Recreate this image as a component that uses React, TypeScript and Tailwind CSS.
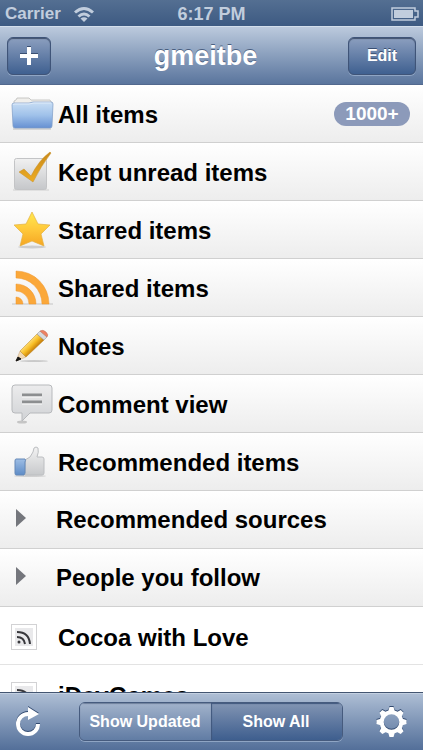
import { useState, type ReactNode } from "react";

function FolderIcon() {
  return (
    <svg width="44" height="36" viewBox="0 0 44 36">
      <defs>
        <linearGradient id="folder" x1="0" y1="0" x2="0" y2="1">
          <stop offset="0" stopColor="#c9def4" />
          <stop offset="0.5" stopColor="#a0c2ea" />
          <stop offset="1" stopColor="#6690d2" />
        </linearGradient>
      </defs>
      <path d="M3 33h38" stroke="#999" strokeWidth="1" opacity="0.6" />
      <path
        d="M4 8V5l2-1 1-2h12l2 2h19l2 3v4H4z"
        fill="#f0efec"
        stroke="#b5b4b2"
        strokeWidth="0.7"
      />
      <path
        d="M2 9q0-2 2-2h15l4-1h18q2 0 2 2l-1 22q0 2-2 2H5q-2 0-2-2z"
        fill="url(#folder)"
        stroke="#7e9cc6"
        strokeWidth="0.7"
      />
      <path d="M3 9q0-1 2-1h14l5-1h17" fill="none" stroke="#deebfa" />
    </svg>
  );
}

function CheckIcon() {
  return (
    <svg width="44" height="42" viewBox="0 0 44 42">
      <defs>
        <linearGradient id="checkBox" x1="0" y1="0" x2="0" y2="1">
          <stop offset="0" stopColor="#f1f1f1" />
          <stop offset="1" stopColor="#c5c7ca" />
        </linearGradient>
        <linearGradient id="checkMark" x1="0" y1="0" x2="0" y2="1">
          <stop offset="0" stopColor="#c98a1b" />
          <stop offset="1" stopColor="#edac22" />
        </linearGradient>
      </defs>
      <path d="M3 39h36" stroke="#bbb" strokeWidth="1" opacity="0.6" />
      <rect
        x="4.5"
        y="7.5"
        width="32"
        height="31"
        rx="2"
        fill="url(#checkBox)"
        stroke="#c3c4c6"
      />
      <path
        d="M9 21l5-3 7 7Q29 9 40 1l1 1Q31 15 23 31z"
        fill="url(#checkMark)"
        stroke="#c68f24"
        strokeWidth="0.5"
      />
    </svg>
  );
}

function StarIcon() {
  return (
    <svg width="44" height="40" viewBox="0 0 44 40">
      <defs>
        <linearGradient id="star" x1="0" y1="0" x2="0" y2="1">
          <stop offset="0" stopColor="#ffe94f" />
          <stop offset="0.5" stopColor="#ffc93b" />
          <stop offset="1" stopColor="#f5a623" />
        </linearGradient>
      </defs>
      <ellipse cx="22" cy="37" rx="14" ry="1.500" fill="#999" opacity="0.4" />
      <path
        d="M22 2l6 12 12 1-9 9 3 12-12-5-12 5 3-12-9-9 12-1z"
        fill="url(#star)"
        stroke="#e4b040"
        strokeWidth="0.7"
        strokeLinejoin="round"
      />
    </svg>
  );
}

function FeedIcon() {
  return (
    <svg width="44" height="38" viewBox="0 0 44 38">
      <path d="M2 35h41" stroke="#aaa" strokeWidth="1" opacity="0.6" />
      <g fill="#fba83a" stroke="#ee972e" strokeWidth="0.5">
        <path d="M6 28a7 7 0 0 1 7 7H6z" />
        <path d="M6 15a20 20 0 0 1 20 20h-7A13 13 0 0 0 6 22z" />
        <path d="M6 2a33 33 0 0 1 33 33h-7A26 26 0 0 0 6 9z" />
      </g>
    </svg>
  );
}

function PencilIcon() {
  return (
    <svg width="44" height="38" viewBox="0 0 44 38">
      <defs>
        <linearGradient id="pencil" gradientUnits="userSpaceOnUse" x1="18" y1="15" x2="25" y2="22">
          <stop offset="0" stopColor="#ffe07a" />
          <stop offset="0.5" stopColor="#f7bd25" />
          <stop offset="1" stopColor="#c47b0a" />
        </linearGradient>
      </defs>
      <ellipse cx="24" cy="34" rx="14" ry="0.800" fill="#999" opacity="0.6" />
      <path d="M6 34l4-10 6 6z" fill="#f1d9b5" stroke="#c9a57b" strokeWidth="0.5" />
      <path d="M6 34l2-4 3 2z" fill="#151515" stroke="#151515" />
      <path d="M10 24L27 7l7 6-18 17z" fill="url(#pencil)" stroke="#b98322" strokeWidth="0.5" />
      <path d="M27 7l3-3 7 6-3 3z" fill="#d8dade" stroke="#8d8f94" strokeWidth="0.5" />
      <path d="M30 4q3-2 6 1t1 5z" fill="#ef8162" stroke="#bd715c" strokeWidth="0.5" />
    </svg>
  );
}

function CommentIcon() {
  return (
    <svg width="44" height="42" viewBox="0 0 44 42">
      <defs>
        <linearGradient id="comment" x1="0" y1="0" x2="0" y2="1">
          <stop offset="0" stopColor="#ececed" />
          <stop offset="1" stopColor="#d0d2d5" />
        </linearGradient>
      </defs>
      <ellipse cx="12" cy="39" rx="5" ry="1.500" fill="#999" opacity="0.5" />
      <path
        d="M5 2h34q3 0 3 3v22q0 3-3 3H20l-8 8v-8H5q-3 0-3-3V5q0-3 3-3z"
        fill="url(#comment)"
        stroke="#b7b9bc"
      />
      <path d="M12 12h20M12 19h20" stroke="#8c8e90" strokeWidth="3" />
      <path d="M12 14h20M12 21h20" stroke="#fafafa" />
    </svg>
  );
}

function ThumbIcon() {
  return (
    <svg width="44" height="32" viewBox="0 0 44 32">
      <defs>
        <linearGradient id="hand" x1="0" y1="0" x2="0" y2="1">
          <stop offset="0" stopColor="#f3f3f3" />
          <stop offset="1" stopColor="#c7c9cb" />
        </linearGradient>
        <linearGradient id="cuff" x1="0" y1="0" x2="0" y2="1">
          <stop offset="0" stopColor="#9ebee5" />
          <stop offset="1" stopColor="#5d8bc6" />
        </linearGradient>
      </defs>
      <ellipse cx="20" cy="30" rx="16" ry="1" fill="#bbb" opacity="0.6" />
      <path
        d="M15 14l5-3 3-5 1-4q2-2 4 0 1 4-1 9h5q2 0 2 2v14q0 2-2 2H15z"
        fill="url(#hand)"
        stroke="#bcbec1"
      />
      <path
        d="M6 13h9q1 1 0 3v11l-1 2H6q-1 0-1-2V15q0-2 1-2z"
        fill="url(#cuff)"
        stroke="#6488b7"
      />
    </svg>
  );
}

function FaviconPlaceholder() {
  return (
    <span className="flex size-[26px] items-center justify-center border border-[#d2d2d4] bg-white">
      <svg width="18" height="18" viewBox="0 0 18 18">
        <path d="M0 0h18v18H0z" fill="#e9e9eb" />
        <g fill="none" stroke="#38383c" strokeWidth="2">
          <path d="M2 4q12 0 13 12M2 9q7 0 8 7" />
        </g>
        <circle cx="4" cy="14" r="1.500" fill="#38383c" />
      </svg>
    </span>
  );
}

function WifiIcon() {
  return (
    <svg width="22" height="17" viewBox="0 0 22 17">
      <g fill="none" stroke="#c1cddd" strokeWidth="3">
        <path d="M2 6.500q9-8 18 0" />
        <path d="M5.500 10.500q5.500-5 11 0" />
      </g>
      <path d="M7.500 12.500q3.500-2.500 7 0L11 16z" fill="#c1cddd" />
    </svg>
  );
}

function BatteryIcon() {
  return (
    <svg width="28" height="14" viewBox="0 0 28 14">
      <path
        d="M1 1h23v3h3v6h-3v3H1z"
        fill="none"
        stroke="#c1cddd"
        strokeWidth="1.500"
      />
      <path d="M3 3h19v8H3z" fill="#c1cddd" />
    </svg>
  );
}

function RefreshIcon() {
  return (
    <svg width="28" height="32" viewBox="0 0 28 32">
      <g transform="translate(0 -1)" stroke="#324a70" fill="#324a70">
        <path d="M24 18a10 10 0 1 1-10-10" fill="none" strokeWidth="4" />
        <path d="M14 1l11 7-11 6z" stroke="none" />
      </g>
      <path d="M24 18a10 10 0 1 1-10-10" fill="none" stroke="#fff" strokeWidth="4" />
      <path d="M14 1l11 7-11 6z" fill="#fff" />
    </svg>
  );
}

const teeth = [0, 45, 90, 135, 180, 225, 270, 315];

function GearShape({ color }: { color: string }) {
  return (
    <g fill={color}>
      {teeth.map((angle) => (
        <path key={angle} d="M12 6l1.500-5h4L19 6z" transform={`rotate(${angle} 15.5 16)`} />
      ))}
      <circle cx="15.500" cy="16" r="9.800" fill="none" stroke={color} strokeWidth="4" />
    </g>
  );
}

function GearIcon() {
  return (
    <svg width="31" height="32" viewBox="0 0 31 32">
      <g transform="translate(0 -1)">
        <GearShape color="#324a70" />
      </g>
      <GearShape color="#fff" />
    </svg>
  );
}

type Item = { label: string; icon: ReactNode; badge?: string };

const items: Item[] = [
  { label: "All items", icon: <FolderIcon />, badge: "1000+" },
  { label: "Kept unread items", icon: <CheckIcon /> },
  { label: "Starred items", icon: <StarIcon /> },
  { label: "Shared items", icon: <FeedIcon /> },
  { label: "Notes", icon: <PencilIcon /> },
  { label: "Comment view", icon: <CommentIcon /> },
  { label: "Recommended items", icon: <ThumbIcon /> },
];

const folders = ["Recommended sources", "People you follow"];
const feeds = ["Cocoa with Love", "iDevGames"];

const rowClass =
  "flex h-[58px] w-full items-center border-b text-left text-2xl font-bold";
const shadedClass = "border-[#d0d0d0] bg-linear-to-b from-white to-[#ededed]";
const navButtonClass =
  "flex h-[38px] items-center justify-center rounded-md border border-[#3f5478] bg-linear-to-b from-[#8c9fbf] to-[#3f6090] text-white shadow-[inset_0_1px_1px_#40506c,0_1px_0_#8fa5c4] text-shadow-[0_-1px_0_#3a4f72]";

export default function App() {
  const [filter, setFilter] = useState("Show All");

  return (
    <div className="flex h-screen flex-col overflow-hidden bg-white font-['Liberation_Sans',Arial,sans-serif] text-black">
      {/* Status bar */}
      <div className="grid h-[26px] shrink-0 grid-cols-3 items-center bg-linear-to-b from-[#546f92] to-[#3d5a82] px-1 text-[17px] font-bold text-[#c1cddd]">
        <div className="flex items-center gap-3 pl-px">
          <span>Carrier</span>
          <WifiIcon />
        </div>
        <span className="text-center text-lg whitespace-nowrap">6:17 PM</span>
        <div className="flex justify-end">
          <BatteryIcon />
        </div>
      </div>

      {/* Navigation bar */}
      <header className="flex h-[59px] shrink-0 items-center justify-between border-t border-b border-t-[#d3deeb] border-b-[#52698e] bg-linear-to-b from-[#bccadd] to-[#5a759d] px-[7px]">
        <div className="flex flex-1">
          <button className={`${navButtonClass} w-11`} aria-label="Add">
            <svg width="18" height="20" viewBox="0 0 18 20">
              <path d="M7 0h4v7h7v4h-7v8H7v-8H0V7h7z" fill="#3a4f72" />
              <path d="M7 1h4v7h7v4h-7v7H7v-7H0V8h7z" fill="#fff" />
            </svg>
          </button>
        </div>
        <h1 className="pr-3 text-[27px] leading-8 font-bold text-white text-shadow-[0_-1px_0_#4a5f80]">
          gmeitbe
        </h1>
        <div className="flex flex-1 justify-end">
          <button className={`${navButtonClass} w-[68px] text-base font-bold`}>
            Edit
          </button>
        </div>
      </header>

      {/* Subscriptions */}
      <main className="min-h-0 flex-1 overflow-hidden">
        <ul>
          {items.map((item) => (
            <li key={item.label}>
              <button className={`${rowClass} ${shadedClass} gap-1 pr-[13px] pl-[10px]`}>
                <span className="shrink-0">{item.icon}</span>
                <span className="flex-1 pt-[3px]">{item.label}</span>
                {item.badge && (
                  <span className="flex h-6 w-[76px] items-center justify-center rounded-full bg-[#8c9aba] text-[19px] text-white">
                    {item.badge}
                  </span>
                )}
              </button>
            </li>
          ))}
          {folders.map((folder) => (
            <li key={folder}>
              <button className={`${rowClass} ${shadedClass} gap-[30px] pb-1 pl-4`}>
                <svg width="10" height="18" viewBox="0 0 10 18">
                  <path d="M0 0l10 9-10 9z" fill="#74767c" />
                </svg>
                <span className="pt-[5px]">{folder}</span>
              </button>
            </li>
          ))}
          {feeds.map((feed) => (
            <li key={feed}>
              <button className={`${rowClass} gap-[21px] border-[#e3e3e3] bg-white pt-[2px] pl-[11px]`}>
                <FaviconPlaceholder />
                <span className="pt-[3px]">{feed}</span>
              </button>
            </li>
          ))}
        </ul>
      </main>

      {/* Toolbar */}
      <footer className="flex h-[58px] shrink-0 items-center justify-between border-t border-[#435571] bg-linear-to-b from-[#afbfd5] to-[#536f99] pr-4 pl-[14px] shadow-[inset_0_1px_0_#c3d0e1]">
        <button aria-label="Refresh">
          <RefreshIcon />
        </button>
        <div className="ml-[3px] flex h-[39px] w-[264px] overflow-hidden rounded-md border border-[#465b7e] text-base font-bold text-white shadow-[0_1px_0_#8fa5c4] text-shadow-[0_-1px_0_#465b7e]">
          {["Show Updated", "Show All"].map((name) => (
            <button
              key={name}
              onClick={() => setFilter(name)}
              aria-pressed={filter === name}
              className={
                filter === name
                  ? "flex-1 bg-linear-to-b from-[#8295b3] to-[#3e5e8e] whitespace-nowrap shadow-[inset_1px_1px_1px_#40577d]"
                  : "flex-1 bg-linear-to-b from-[#a2b3cb] to-[#617ca4] whitespace-nowrap shadow-[inset_0_1px_1px_#6d7f9b]"
              }
            >
              {name}
            </button>
          ))}
        </div>
        <button aria-label="Settings">
          <GearIcon />
        </button>
      </footer>
    </div>
  );
}
